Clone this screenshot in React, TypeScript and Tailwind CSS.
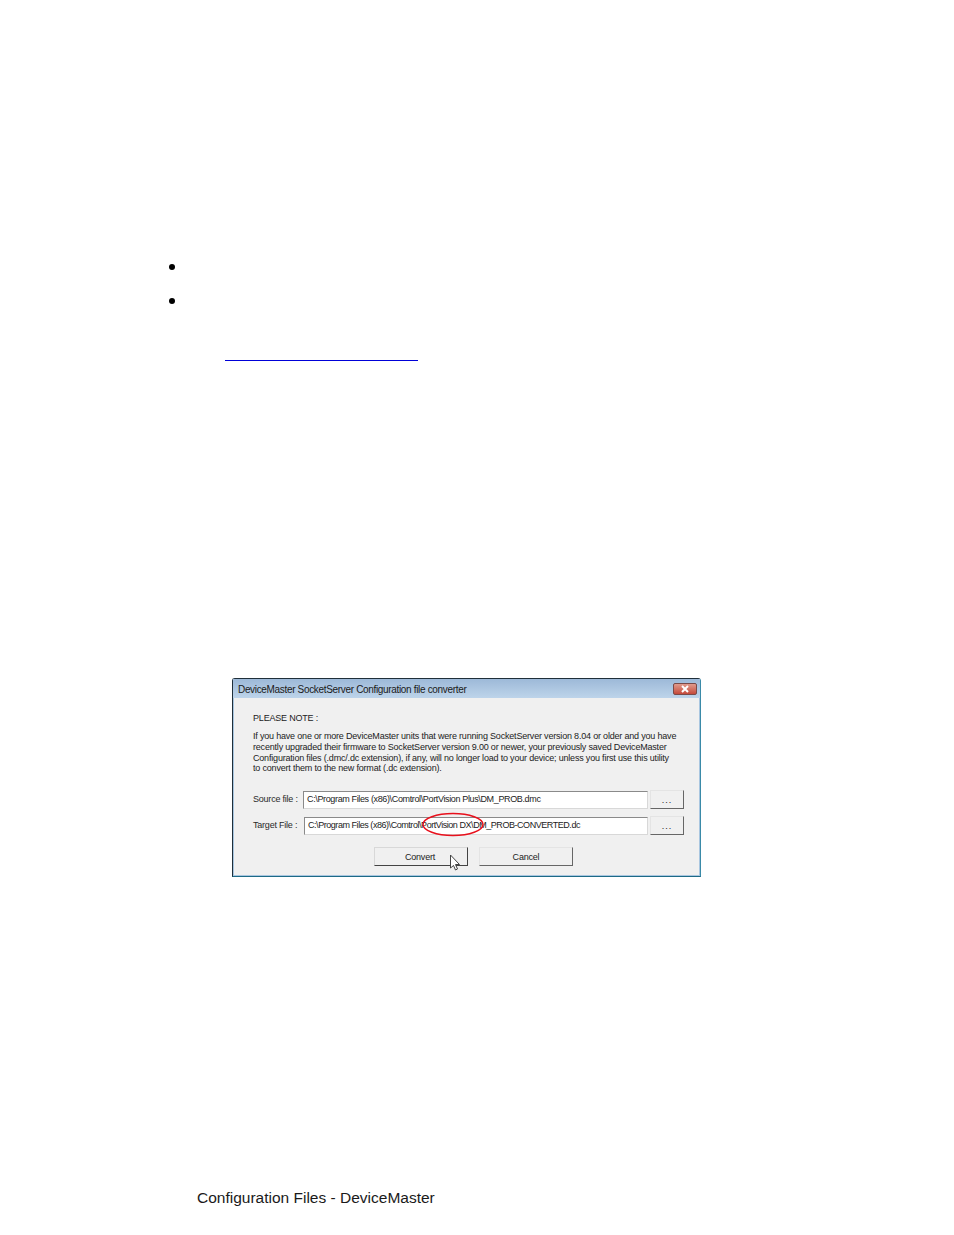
const dialogFont = "font-['Liberation_Sans',Arial,sans-serif]";

function FileRow({ label, labelClass, value, inputClass }: { label: string; labelClass: string; value: string; inputClass: string }) {
  return (
    <div className="flex items-center h-[19px]">
      <span className={`text-[9px] tracking-[-0.22px] text-[#2a2a2a] whitespace-nowrap ${labelClass}`}>{label}</span>
      <div className={`h-[18px] flex items-center bg-white border border-[#8a8a8a] border-r-[#d8d8d8] border-b-[#d8d8d8] text-[9px] text-[#222] whitespace-nowrap overflow-hidden ${inputClass}`}>
        {value}
      </div>
      <button className="ml-[2px] w-[34px] h-[19px] bg-[#f0f0f0] border border-[#e4e4e4] border-r-[#666] border-b-[#666] text-[9px] leading-[16px] text-[#222] tracking-[1px]">...</button>
    </div>
  );
}

export default function App() {
  return (
    <div className="w-[954px] h-[1235px] bg-white flex flex-col overflow-hidden font-['Liberation_Sans',Arial,sans-serif]">
      {/* Bullets */}
      <div className="mt-[264px] ml-[169px] flex flex-col gap-[28px]">
        <div className="w-[6px] h-[6px] rounded-full bg-black" />
        <div className="w-[6px] h-[6px] rounded-full bg-black" />
      </div>

      {/* Link rule */}
      <div className="mt-[56px] ml-[225px] w-[193px] h-px bg-[#0000d8]" />

      {/* Dialog */}
      <div className={`mt-[317px] ml-[232px] w-[469px] h-[199px] relative flex flex-col border border-[#1f2f3a] border-b-[#1d6a86] border-r-[#3a8aa8] rounded-t-[3px] bg-[#a9c6e0] ${dialogFont}`}>
        <div className="h-[19px] shrink-0 flex items-center justify-between pl-[5px] pr-[3px] bg-gradient-to-b from-[#9db9d8] to-[#bdd4ea]">
          <span className="mt-[1px] text-[10px] tracking-[-0.33px] text-[#1a1a1a] whitespace-nowrap">DeviceMaster SocketServer Configuration file converter</span>
          <div className="w-[24px] h-[12px] flex items-center justify-center rounded-[2px] border border-[#7a4a48] bg-gradient-to-b from-[#e09a8c] to-[#c4483a]">
            <svg width="10" height="8" viewBox="0 0 10 8">
              <path d="M2 1 L8 7 M8 1 L2 7" stroke="#fff" strokeWidth="2" fill="none" />
            </svg>
          </div>
        </div>
        <div className="flex-1 mx-[1px] mb-[1px] bg-[#f0f0f0] pl-[19px] flex flex-col">
          <p className="mt-[15px] text-[9px] tracking-[-0.19px] leading-[11px] text-[#222]">PLEASE NOTE :</p>
          <div className="mt-[7px] text-[9px] tracking-[-0.19px] leading-[10.8px] text-[#222] whitespace-nowrap">
            <p>If you have one or more DeviceMaster units that were running SocketServer version 8.04 or older and you have</p>
            <p>recently upgraded their firmware to SocketServer version 9.00 or newer, your previously saved DeviceMaster</p>
            <p>Configuration files (.dmc/.dc extension), if any, will no longer load to your device; unless you first use this utility</p>
            <p>to convert them to the new format (.dc extension).</p>
          </div>
          <div className="mt-[16px] flex flex-col gap-[7px]">
            <FileRow label="Source file :" labelClass="w-[50px]" inputClass="w-[345px] pl-[3px] tracking-[-0.36px]" value="C:\Program Files (x86)\Comtrol\PortVision Plus\DM_PROB.dmc" />
            <FileRow label="Target File :" labelClass="w-[51px]" inputClass="w-[344px] pl-[3px] tracking-[-0.45px]" value="C:\Program Files (x86)\Comtrol\PortVision DX\DM_PROB-CONVERTED.dc" />
          </div>
          <div className="mt-[12px] ml-[121px] flex gap-[11px]">
            <button className="w-[94px] h-[19px] pr-[2px] bg-[#f0f0f0] border border-[#d8d8d8] border-r-[#444] border-b-[#444] text-[9px] tracking-[-0.2px] leading-[16px] text-[#222]">Convert</button>
            <button className="w-[94px] h-[19px] bg-[#f0f0f0] border border-[#e4e4e4] border-r-[#666] border-b-[#666] text-[9px] tracking-[-0.2px] leading-[16px] text-[#222]">Cancel</button>
          </div>
        </div>

        {/* Red annotation circle */}
        <svg className="absolute left-[188px] top-[133px]" width="64" height="26" viewBox="0 0 64 26">
          <ellipse cx="32" cy="12.5" rx="30" ry="11" fill="none" stroke="#e8101c" strokeWidth="1.5" />
        </svg>

        {/* Mouse cursor */}
        <svg className="absolute left-[216px] top-[175px]" width="13" height="18" viewBox="0 0 13 18">
          <path d="M1.5 1 L1.5 14 L4.5 11.5 L6.5 16 L8.5 15 L6.5 10.5 L10.5 10.5 Z" fill="#fff" stroke="#444" strokeWidth="1" strokeLinejoin="round" />
        </svg>
      </div>

      {/* Footer */}
      <div className="mt-[312px] ml-[197px] text-[15.5px] leading-[18px] text-[#1a1a1a]">Configuration Files - DeviceMaster</div>
    </div>
  );
}
